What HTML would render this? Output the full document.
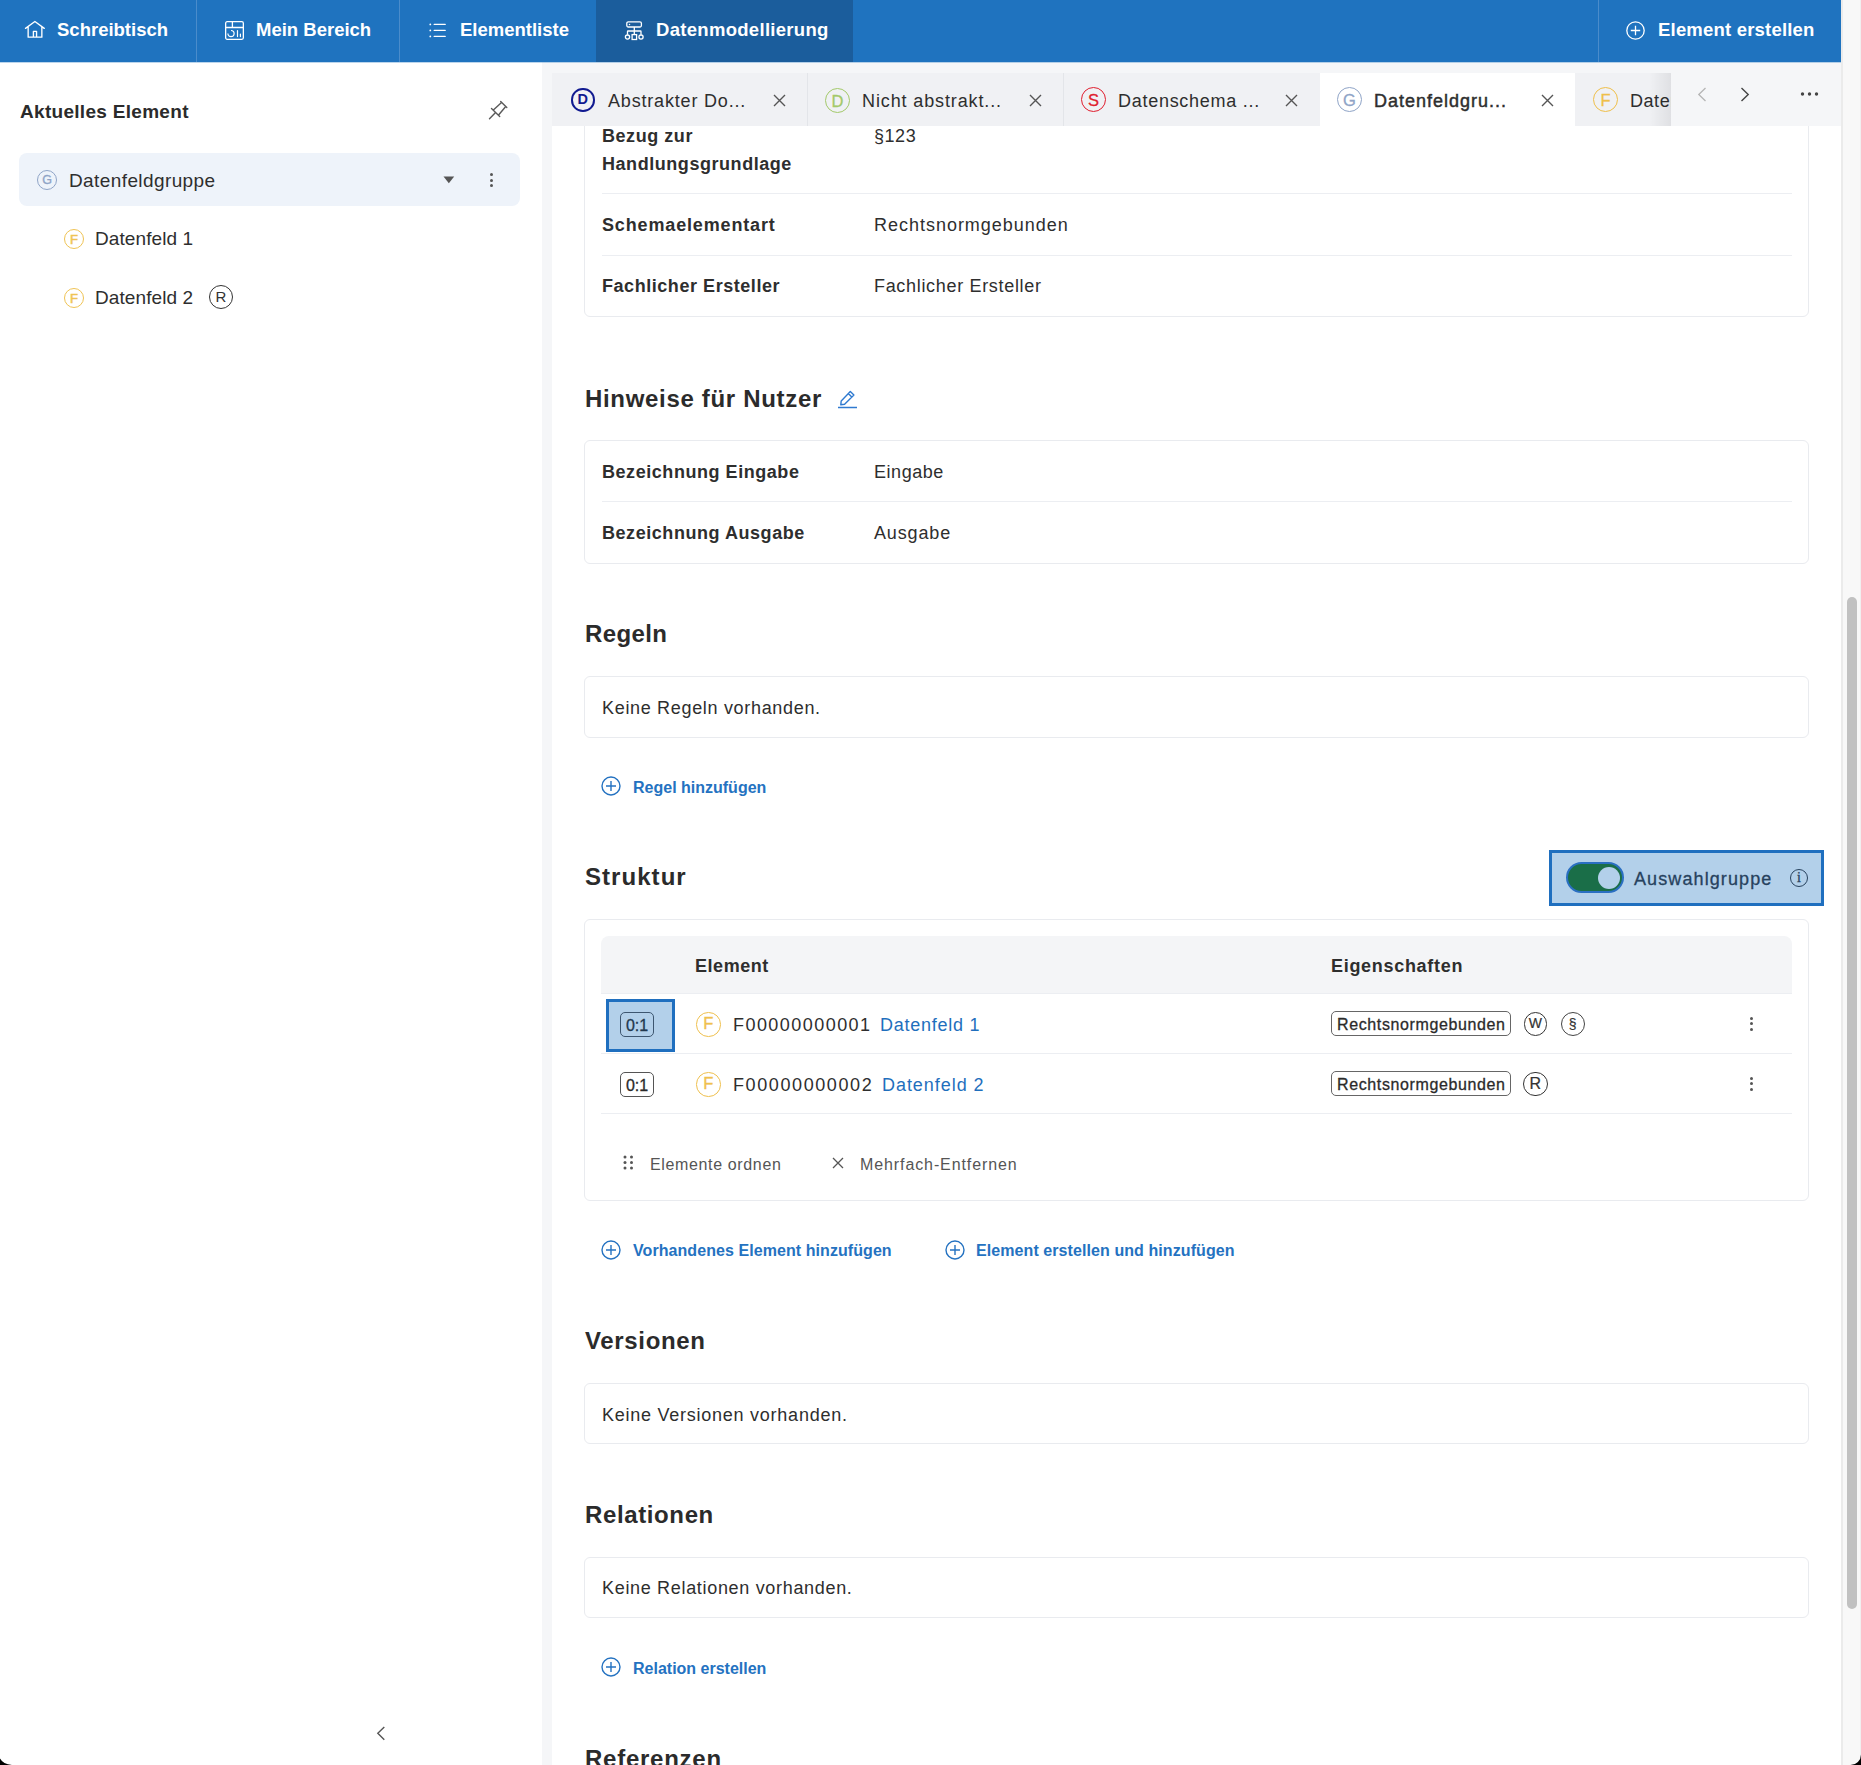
<!DOCTYPE html>
<html><head><meta charset="utf-8">
<style>
*{box-sizing:border-box;margin:0;padding:0}
html,body{width:1861px;height:1765px;overflow:hidden;background:#fff}
body{position:relative;font-family:"Liberation Sans",sans-serif;color:#2e2e2e}
.a{position:absolute}
.t{position:absolute;white-space:nowrap;line-height:1;}
.b{font-weight:700}
.nav{left:0;top:0;width:1841px;height:62px;background:#1f73bf}
.nav .t{color:#fff;font-size:18.5px;font-weight:700;top:21px}
.nsep{position:absolute;top:0;width:1px;height:62px;background:#4a8ccb}
.side{left:0;top:62px;width:542px;height:1703px;background:#fff}
.gut{left:542px;top:62px;width:1299px;height:1703px;background:#f5f6f8}
.panel{left:552px;top:126px;width:1289px;height:1639px;background:#fff}
.tab{position:absolute;top:73px;height:53px;width:256px;background:#f0f1f4;overflow:hidden}
.tab.act{background:#fff}
.circ{position:absolute;border-radius:50%;text-align:center;font-family:"Liberation Sans",sans-serif}
.card{position:absolute;left:584px;width:1225px;border:1px solid #e9ebef;border-radius:6px;background:#fff}
.sep{position:absolute;left:602px;width:1190px;height:1px;background:#eceef2}
.r18{font-size:18px;letter-spacing:0.55px}
.h{font-size:24px;font-weight:700;letter-spacing:0.4px;color:#2b2b2b}
.lk{font-size:16px;font-weight:700;color:#2472c1}
.sb{position:absolute;left:1841px;top:0;width:20px;height:1765px;background:#f8f8f8;border-left:2px solid #ebebeb;border-right:1px solid #f0f0f0}
</style></head><body>

<!-- NAV -->
<div class="a nav">
  <!-- house -->
  <svg class="a" style="left:24px;top:20px" width="22" height="20" viewBox="0 0 22 20"><path d="M1.5 8.4 L10.9 1.5 L20.3 8.4 M4.15 6.6 V17.15 H17.85 V6.6 M9.4 17.15 V11.35 H12.55 V17.15" fill="none" stroke="#fff" stroke-width="1.35" stroke-linejoin="round" stroke-linecap="round"/></svg>
  <div class="t" style="left:57px">Schreibtisch</div>
  <div class="nsep" style="left:196px"></div>
  <!-- dashboard -->
  <svg class="a" style="left:225px;top:21px" width="19" height="19" viewBox="0 0 19 19"><rect x="0.65" y="0.65" width="17.7" height="17.7" rx="1.5" fill="none" stroke="#fff" stroke-width="1.3"/><path d="M0.65 6.5 H18.35 M7.4 0.65 V6.5" fill="none" stroke="#fff" stroke-width="1.3"/><path d="M6 9.5 A3.1 3.1 0 1 1 2.9 12.6" fill="none" stroke="#fff" stroke-width="1.2"/><path d="M12.5 9.6 V15.6 M15.4 13 V15.6" stroke="#fff" stroke-width="1.2" stroke-linecap="round"/></svg>
  <div class="t" style="left:256px">Mein Bereich</div>
  <div class="nsep" style="left:399px"></div>
  <!-- list -->
  <svg class="a" style="left:429px;top:23px" width="18" height="15" viewBox="0 0 18 15"><circle cx="1.3" cy="1.4" r="0.9" fill="#fff"/><circle cx="1.3" cy="7.4" r="0.9" fill="#fff"/><circle cx="1.3" cy="13.4" r="0.9" fill="#fff"/><path d="M5.2 1.4 H16.2 M5.2 7.4 H16.2 M5.2 13.4 H16.2" stroke="#fff" stroke-width="1.3" stroke-linecap="round"/></svg>
  <div class="t" style="left:460px">Elementliste</div>
  <div class="a" style="left:596px;top:0;width:257px;height:62px;background:#1b5d9c"></div>
  <!-- hierarchy -->
  <svg class="a" style="left:624px;top:20px" width="20" height="21" viewBox="0 0 20 21"><rect x="2.8" y="1.8" width="14.6" height="5.2" rx="1.5" fill="none" stroke="#fff" stroke-width="1.3"/><circle cx="5.5" cy="4.4" r="0.75" fill="#fff"/><path d="M10.3 7 V14.5 M3.5 14.8 V11.5 Q3.5 11 4 11 H16.5 Q17 11 17 11.5 V14.8" fill="none" stroke="#fff" stroke-width="1.3"/><circle cx="3.5" cy="17.1" r="2.1" fill="none" stroke="#fff" stroke-width="1.3"/><circle cx="17" cy="17.1" r="2.1" fill="none" stroke="#fff" stroke-width="1.3"/><rect x="8.1" y="14.6" width="4.5" height="4.9" fill="none" stroke="#fff" stroke-width="1.3"/></svg>
  <div class="t" style="left:656px;letter-spacing:0.3px">Datenmodellierung</div>
  <div class="nsep" style="left:1598px"></div>
  <svg class="a" style="left:1626px;top:21px" width="19" height="19" viewBox="0 0 19 19"><circle cx="9.5" cy="9.5" r="8.7" fill="none" stroke="#fff" stroke-width="1.3"/><path d="M9.5 4.8 V14.2 M4.8 9.5 H14.2" stroke="#fff" stroke-width="1.3"/></svg>
  <div class="t" style="left:1658px;letter-spacing:0.2px">Element erstellen</div>
</div>

<!-- SIDEBAR -->
<div class="a side"></div>
<div class="t b" style="left:20px;top:102px;font-size:19px;letter-spacing:0.3px;color:#2b2b2b">Aktuelles Element</div>
<svg class="a" style="left:488px;top:100px" width="21" height="21" viewBox="0 0 21 21"><path d="M1.5 18.8 L7.1 13 M3.5 8.6 L11.7 16.6 M5.9 9.6 L13 3 M10.8 14.7 L17.1 7.2 M12.7 1.5 L18.8 7.6" fill="none" stroke="#5a5a5a" stroke-width="1.4" stroke-linecap="round"/></svg>
<div class="a" style="left:19px;top:153px;width:501px;height:53px;background:#eef3fa;border-radius:8px"></div>
<div class="circ" style="left:37px;top:170px;width:20px;height:20px;border:1px solid #8fa4c7;color:#8fa4c7;font-size:12.5px;line-height:18.5px;-webkit-text-stroke:0.35px #8fa4c7">G</div>
<div class="t" style="left:69px;top:171px;font-size:19px;letter-spacing:0.4px">Datenfeldgruppe</div>
<svg class="a" style="left:443px;top:176px" width="12" height="8" viewBox="0 0 12 8"><path d="M0.5 0.5 H11.2 L5.85 7.3 Z" fill="#555"/></svg>
<div class="a" style="left:490px;top:173px;width:3px;height:3px;border-radius:50%;background:#555"></div>
<div class="a" style="left:490px;top:178.5px;width:3px;height:3px;border-radius:50%;background:#555"></div>
<div class="a" style="left:490px;top:184px;width:3px;height:3px;border-radius:50%;background:#555"></div>
<div class="circ" style="left:64px;top:229px;width:20px;height:20px;border:1.1px solid #efc354;color:#efc354;font-size:13px;line-height:19px;-webkit-text-stroke:0.55px #efc354">F</div>
<div class="t" style="left:95px;top:229px;font-size:19px;letter-spacing:0.1px">Datenfeld 1</div>
<div class="circ" style="left:64px;top:287.5px;width:20px;height:20px;border:1.1px solid #efc354;color:#efc354;font-size:13px;line-height:19px;-webkit-text-stroke:0.55px #efc354">F</div>
<div class="t" style="left:95px;top:288px;font-size:19px;letter-spacing:0.1px">Datenfeld 2</div>
<div class="circ" style="left:209px;top:285px;width:24px;height:24px;border:1.3px solid #333;color:#333;font-size:15px;line-height:21.5px">R</div>
<svg class="a" style="left:376px;top:1726px" width="10" height="15" viewBox="0 0 10 15"><path d="M8.3 1 L1.8 7.3 L8.3 13.7" fill="none" stroke="#555" stroke-width="1.4"/></svg>

<!-- MAIN -->
<div class="a gut"></div>
<div class="a panel"></div>

<!-- CONTENT -->
<div class="a" style="left:0;top:0;width:1841px;height:1765px;clip-path:inset(126px 0 0 0)">
<div class="card" style="top:40px;height:277px"></div>
<div class="t b r18" style="left:602px;top:122px;line-height:28px">Bezug zur<br>Handlungsgrundlage</div>
<div class="t r18" style="left:874px;top:127px">§123</div>
<div class="sep" style="top:193px"></div>
<div class="t b r18" style="left:602px;top:216px;letter-spacing:0.85px">Schemaelementart</div>
<div class="t r18" style="left:874px;top:216px;letter-spacing:0.98px">Rechtsnormgebunden</div>
<div class="sep" style="top:255px"></div>
<div class="t b r18" style="left:602px;top:277px">Fachlicher Ersteller</div>
<div class="t r18" style="left:874px;top:277px;letter-spacing:0.68px">Fachlicher Ersteller</div>

<div class="t h" style="left:585px;top:387px;letter-spacing:0.68px">Hinweise für Nutzer</div>
<svg class="a" style="left:837px;top:389px" width="21" height="20" viewBox="0 0 21 20"><path d="M3.8 15.8 L4.2 11.9 L13.3 2.6 L16.9 6.1 L7.6 15.3 Z M11.3 4.6 L14.8 8.1" fill="none" stroke="#2f7ad0" stroke-width="1.4" stroke-linejoin="round"/><path d="M1 18.5 H20" stroke="#2f7ad0" stroke-width="1.5"/></svg>
<div class="card" style="top:440px;height:124px"></div>
<div class="t b r18" style="left:602px;top:463px">Bezeichnung Eingabe</div>
<div class="t r18" style="left:874px;top:463px">Eingabe</div>
<div class="sep" style="top:501px"></div>
<div class="t b r18" style="left:602px;top:524px">Bezeichnung Ausgabe</div>
<div class="t r18" style="left:874px;top:524px;letter-spacing:0.85px">Ausgabe</div>

<div class="t h" style="left:585px;top:622px">Regeln</div>
<div class="card" style="top:676px;height:62px"></div>
<div class="t r18" style="left:602px;top:699px;letter-spacing:0.68px">Keine Regeln vorhanden.</div>
<svg class="a" style="left:601px;top:776px" width="20" height="20" viewBox="0 0 20 20"><circle cx="10" cy="10" r="9" fill="none" stroke="#2472c1" stroke-width="1.4"/><path d="M10 5 V15 M5 10 H15" stroke="#2472c1" stroke-width="1.4"/></svg>
<div class="t lk" style="left:633px;top:780px">Regel hinzufügen</div>

<div class="t h" style="left:585px;top:865px;letter-spacing:1.05px">Struktur</div>
<div class="card" style="top:919px;height:282px"></div>
<div class="a" style="left:601px;top:936px;width:1191px;height:58px;background:#f4f5f7;border-radius:8px 8px 0 0;border-bottom:1px solid #eceef2"></div>
<div class="t b r18" style="left:695px;top:957px">Element</div>
<div class="t b r18" style="left:1331px;top:957px;letter-spacing:0.7px">Eigenschaften</div>
<div class="sep" style="left:601px;width:1191px;top:1053px"></div>
<div class="sep" style="left:601px;width:1191px;top:1113px"></div>

<!-- rows -->
<div class="a" style="left:606px;top:999px;width:69px;height:53px;background:#b3d0ea;border:3px solid #1f6fbf"></div>
<div class="a" style="left:620px;top:1012px;width:34px;height:25px;border:1.2px solid #3d5670;border-radius:5px;font-size:16px;line-height:25px;text-align:center;color:#22384e;letter-spacing:0px;-webkit-text-stroke:0.3px #22384e">0:1</div>
<div class="a" style="left:620px;top:1072px;width:34px;height:25px;border:1.2px solid #555;border-radius:5px;font-size:16px;line-height:25px;text-align:center;color:#2b2b2b;letter-spacing:0px;-webkit-text-stroke:0.3px #2b2b2b">0:1</div>
<div class="circ" style="left:696px;top:1012px;width:24.5px;height:24.5px;border:1.4px solid #efc04e;color:#efc04e;font-size:16.5px;line-height:21.5px;-webkit-text-stroke:0.35px #efc04e">F</div>
<div class="circ" style="left:696px;top:1072px;width:24.5px;height:24.5px;border:1.4px solid #efc04e;color:#efc04e;font-size:16.5px;line-height:21.5px;-webkit-text-stroke:0.35px #efc04e">F</div>
<div class="t" style="left:733px;top:1016px;font-size:18px;letter-spacing:1.45px">F00000000001</div>
<div class="t" style="left:880px;top:1016px;font-size:18px;letter-spacing:0.75px;color:#1f6fbd">Datenfeld 1</div>
<div class="t" style="left:733px;top:1076px;font-size:18px;letter-spacing:1.6px">F00000000002</div>
<div class="t" style="left:882px;top:1076px;font-size:18px;letter-spacing:0.95px;color:#1f6fbd">Datenfeld 2</div>
<div class="a" style="left:1331px;top:1011px;width:180px;height:25px;border:1.4px solid #666;border-radius:5px;font-size:16px;line-height:25.5px;padding-left:5px;color:#2b2b2b;letter-spacing:0.62px;white-space:nowrap;-webkit-text-stroke:0.3px #2b2b2b">Rechtsnormgebunden</div>
<div class="a" style="left:1331px;top:1071px;width:180px;height:25px;border:1.4px solid #666;border-radius:5px;font-size:16px;line-height:25.5px;padding-left:5px;color:#2b2b2b;letter-spacing:0.62px;white-space:nowrap;-webkit-text-stroke:0.3px #2b2b2b">Rechtsnormgebunden</div>
<div class="circ" style="left:1523.5px;top:1012px;width:23.5px;height:23.5px;border:1.8px solid #333;color:#333;font-size:14px;line-height:20.5px;-webkit-text-stroke:0.2px #333">W</div>
<div class="circ" style="left:1560.5px;top:1011.5px;width:24.5px;height:24.5px;border:1.3px solid #444;color:#333;font-size:14px;line-height:22px;-webkit-text-stroke:0.2px #333">§</div>
<div class="circ" style="left:1523px;top:1071.5px;width:24.5px;height:24.5px;border:1.3px solid #333;color:#333;font-size:16px;line-height:22px;-webkit-text-stroke:0.2px #333">R</div>
<div class="a" style="left:1749.8px;top:1017px;width:3px;height:3px;border-radius:50%;background:#555"></div>
<div class="a" style="left:1749.8px;top:1022.3px;width:3px;height:3px;border-radius:50%;background:#555"></div>
<div class="a" style="left:1749.8px;top:1027.6px;width:3px;height:3px;border-radius:50%;background:#555"></div>
<div class="a" style="left:1749.8px;top:1077px;width:3px;height:3px;border-radius:50%;background:#555"></div>
<div class="a" style="left:1749.8px;top:1082.3px;width:3px;height:3px;border-radius:50%;background:#555"></div>
<div class="a" style="left:1749.8px;top:1087.6px;width:3px;height:3px;border-radius:50%;background:#555"></div>
<!-- footer -->
<svg class="a" style="left:623px;top:1155px" width="11" height="15" viewBox="0 0 11 15"><g fill="#555"><circle cx="2" cy="2" r="1.5"/><circle cx="8.5" cy="2" r="1.5"/><circle cx="2" cy="7.5" r="1.5"/><circle cx="8.5" cy="7.5" r="1.5"/><circle cx="2" cy="13" r="1.5"/><circle cx="8.5" cy="13" r="1.5"/></g></svg>
<div class="t" style="left:650px;top:1157px;font-size:16px;letter-spacing:0.64px;color:#555">Elemente ordnen</div>
<svg class="a" style="left:832px;top:1157px" width="12" height="12" viewBox="0 0 12 12"><path d="M1 1 L11 11 M11 1 L1 11" stroke="#555" stroke-width="1.3"/></svg>
<div class="t" style="left:860px;top:1157px;font-size:16px;letter-spacing:0.9px;color:#555">Mehrfach-Entfernen</div>
<!-- links -->
<svg class="a" style="left:601px;top:1240px" width="20" height="20" viewBox="0 0 20 20"><circle cx="10" cy="10" r="9" fill="none" stroke="#2472c1" stroke-width="1.4"/><path d="M10 5 V15 M5 10 H15" stroke="#2472c1" stroke-width="1.4"/></svg>
<div class="t lk" style="left:633px;top:1243px;letter-spacing:0.07px">Vorhandenes Element hinzufügen</div>
<svg class="a" style="left:945px;top:1240px" width="20" height="20" viewBox="0 0 20 20"><circle cx="10" cy="10" r="9" fill="none" stroke="#2472c1" stroke-width="1.4"/><path d="M10 5 V15 M5 10 H15" stroke="#2472c1" stroke-width="1.4"/></svg>
<div class="t lk" style="left:976px;top:1243px;letter-spacing:0.08px">Element erstellen und hinzufügen</div>

<div class="t h" style="left:585px;top:1329px;letter-spacing:0.65px">Versionen</div>
<div class="card" style="top:1383px;height:61px"></div>
<div class="t r18" style="left:602px;top:1406px;letter-spacing:0.75px">Keine Versionen vorhanden.</div>

<div class="t h" style="left:585px;top:1503px;letter-spacing:0.62px">Relationen</div>
<div class="card" style="top:1557px;height:61px"></div>
<div class="t r18" style="left:602px;top:1579px;letter-spacing:0.68px">Keine Relationen vorhanden.</div>
<svg class="a" style="left:601px;top:1657px" width="20" height="20" viewBox="0 0 20 20"><circle cx="10" cy="10" r="9" fill="none" stroke="#2472c1" stroke-width="1.4"/><path d="M10 5 V15 M5 10 H15" stroke="#2472c1" stroke-width="1.4"/></svg>
<div class="t lk" style="left:633px;top:1661px">Relation erstellen</div>
<div class="t h" style="left:585px;top:1747px;letter-spacing:0.75px">Referenzen</div>

<!-- toggle highlight -->
<div class="a" style="left:1549px;top:850px;width:275px;height:56px;background:#b3d0ea;border:3px solid #1f6fbf"></div>
<div class="a" style="left:1566px;top:862px;width:58px;height:31px;border-radius:16px;background:#1a6e48;border:2.5px solid #2a6fc2"></div>
<div class="a" style="left:1597.5px;top:866.5px;width:22px;height:22px;border-radius:50%;background:#b3d0ea"></div>
<div class="t" style="left:1634px;top:870px;font-size:18px;letter-spacing:1.1px;color:#27425e;-webkit-text-stroke:0.3px #27425e">Auswahlgruppe</div>
<div class="circ" style="left:1790px;top:869px;width:18px;height:18px;border:1.5px solid #27425e;color:#27425e;font-family:'Liberation Serif',serif;font-size:14px;line-height:15.5px;-webkit-text-stroke:0.3px #27425e">i</div>
</div>

<!-- TABS -->
<div class="tab" style="left:552px"></div>
<div class="a" style="left:807px;top:73px;width:1px;height:53px;background:#e3e5e9"></div>
<div class="tab" style="left:808px;width:255px"></div>
<div class="a" style="left:1063px;top:73px;width:1px;height:53px;background:#e3e5e9"></div>
<div class="tab" style="left:1064px"></div>
<div class="tab act" style="left:1320px;width:255px"></div>
<div class="tab" style="left:1575px;width:96px"></div>

<div class="circ" style="left:571px;top:88px;width:23.5px;height:23.5px;border:2.2px solid #111a90;color:#111a90;font-size:14.5px;font-weight:700;line-height:19.5px">D</div>
<div class="t" style="left:608px;top:92px;font-size:18px;letter-spacing:0.82px">Abstrakter Do...</div>
<svg class="a" style="left:773px;top:94px" width="13" height="13" viewBox="0 0 13 13"><path d="M1 1 L12 12 M12 1 L1 12" stroke="#555" stroke-width="1.4"/></svg>

<div class="circ" style="left:825px;top:87.5px;width:25px;height:25px;border:1.6px solid #a3c96a;color:#a3c96a;font-size:16.5px;line-height:24.5px;-webkit-text-stroke:0.3px #a3c96a">D</div>
<div class="t" style="left:862px;top:92px;font-size:18px;letter-spacing:0.88px">Nicht abstrakt...</div>
<svg class="a" style="left:1029px;top:94px" width="13" height="13" viewBox="0 0 13 13"><path d="M1 1 L12 12 M12 1 L1 12" stroke="#555" stroke-width="1.4"/></svg>

<div class="circ" style="left:1081px;top:87px;width:25px;height:25px;border:1.6px solid #e01e2e;color:#e01e2e;font-size:16.5px;line-height:24.5px;-webkit-text-stroke:0.3px #e01e2e">S</div>
<div class="t" style="left:1118px;top:92px;font-size:18px;letter-spacing:0.72px">Datenschema ...</div>
<svg class="a" style="left:1285px;top:94px" width="13" height="13" viewBox="0 0 13 13"><path d="M1 1 L12 12 M12 1 L1 12" stroke="#555" stroke-width="1.4"/></svg>

<div class="circ" style="left:1337px;top:87px;width:25px;height:25px;border:1.6px solid #8fa4c7;color:#8fa4c7;font-size:16.5px;line-height:24.5px;-webkit-text-stroke:0.3px #8fa4c7">G</div>
<div class="t" style="left:1374px;top:92px;font-size:18px;letter-spacing:1.0px;-webkit-text-stroke:0.45px #2e2e2e">Datenfeldgru...</div>
<svg class="a" style="left:1541px;top:94px" width="13" height="13" viewBox="0 0 13 13"><path d="M1 1 L12 12 M12 1 L1 12" stroke="#555" stroke-width="1.4"/></svg>

<div class="a" style="left:1575px;top:73px;width:96px;height:53px;overflow:hidden">
<div class="circ" style="left:18px;top:14px;width:25px;height:25px;border:1.6px solid #efbf4a;color:#efbf4a;font-size:16.5px;line-height:24.5px;-webkit-text-stroke:0.3px #efbf4a">F</div>
<div class="t" style="left:55px;top:19px;font-size:18px;letter-spacing:0.55px">Datenfeld 3</div>
<div class="a" style="left:74px;top:0;width:22px;height:53px;background:linear-gradient(to right,rgba(0,0,0,0),rgba(0,0,10,0.07))"></div>
</div>
<div class="a" style="left:1671px;top:62px;width:170px;height:64px;background:#f5f6f8"></div>
<svg class="a" style="left:1697px;top:87px" width="10" height="15" viewBox="0 0 10 15"><path d="M8.5 1 L1.8 7.5 L8.5 14" fill="none" stroke="#b5b5b5" stroke-width="1.3"/></svg>
<svg class="a" style="left:1740px;top:87px" width="10" height="15" viewBox="0 0 10 15"><path d="M1.5 1 L8.2 7.5 L1.5 14" fill="none" stroke="#444" stroke-width="1.4"/></svg>
<svg class="a" style="left:1800px;top:91px" width="19" height="6" viewBox="0 0 19 6"><g fill="#444"><circle cx="2.5" cy="3" r="1.7"/><circle cx="9.5" cy="3" r="1.7"/><circle cx="16.5" cy="3" r="1.7"/></g></svg>

<div class="a" style="left:0;top:62px;width:1841px;height:1px;background:rgba(31,115,191,0.3)"></div>
<!-- SCROLLBAR -->
<div class="sb"></div>
<div class="a" style="left:1847px;top:597px;width:10px;height:1012px;border-radius:5px;background:#c1c1c1"></div>
<!-- corners -->
<svg class="a" style="left:0;top:1745px" width="1861" height="20" viewBox="0 1745 1861 20"><path d="M0 1758.5 Q3 1764 12 1765 L0 1765 Z" fill="#000"/><path d="M1861 1754.5 A10.5 10.5 0 0 1 1850.5 1765 L1861 1765 Z" fill="#000"/></svg>
</body></html>
